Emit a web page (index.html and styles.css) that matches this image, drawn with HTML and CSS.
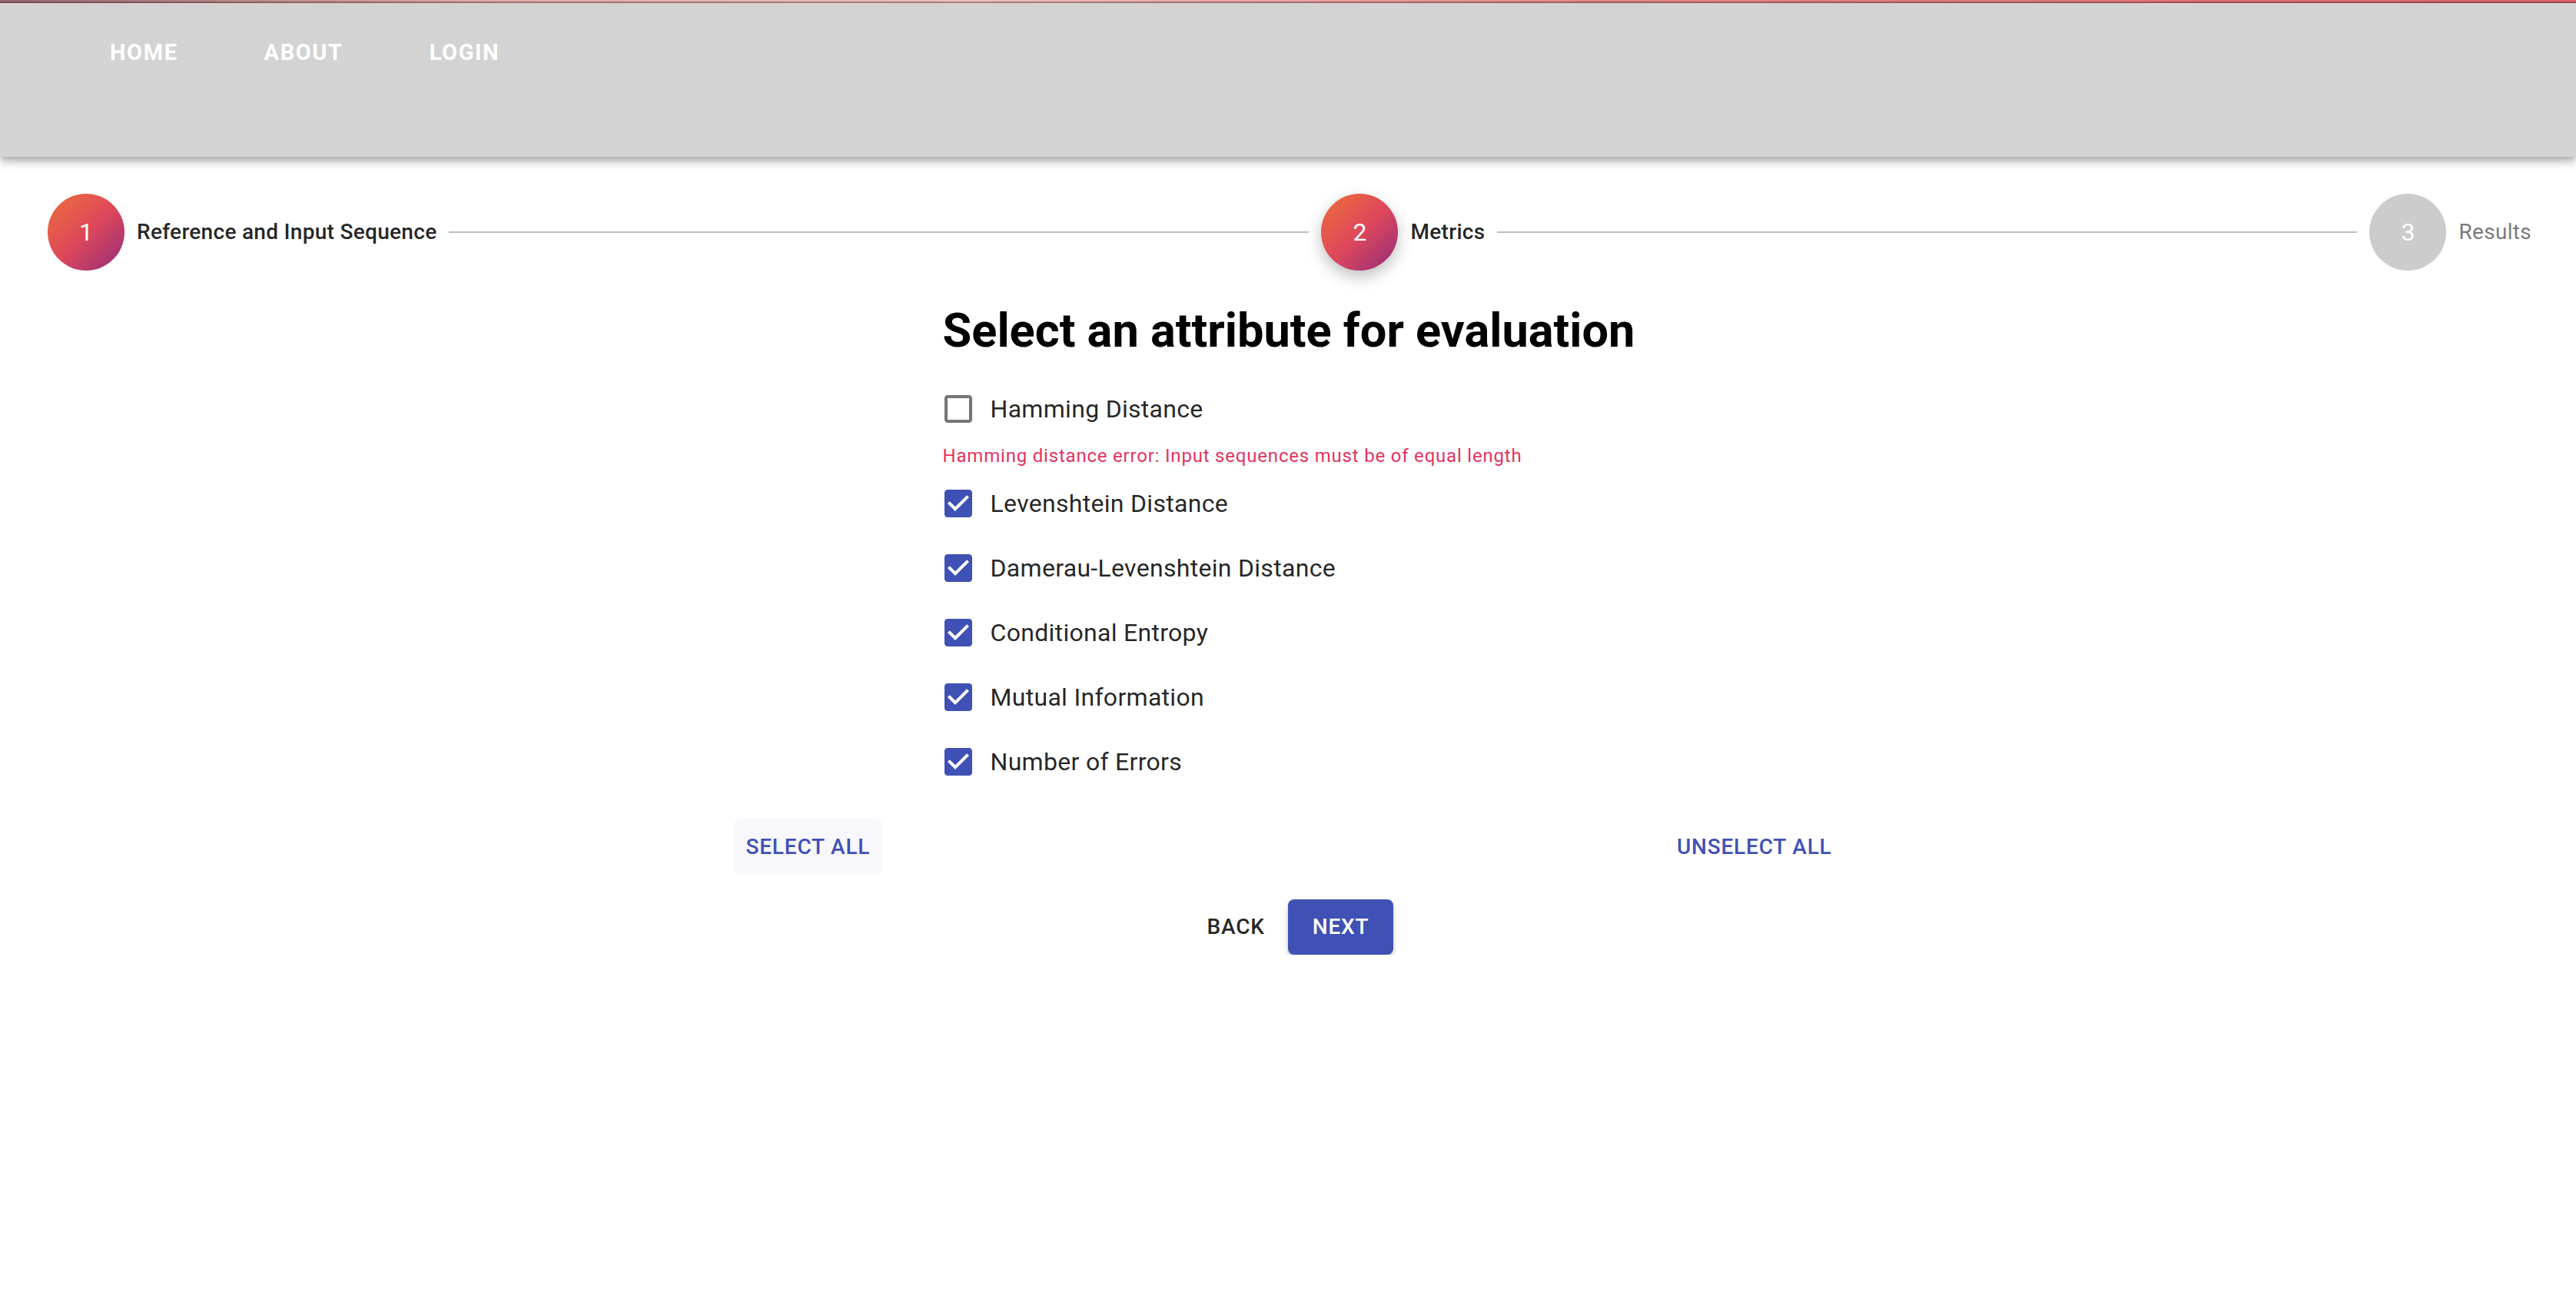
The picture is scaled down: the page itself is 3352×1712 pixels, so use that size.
FILE: index.html
```html
<!DOCTYPE html>
<html lang="en">
<head>
<meta charset="utf-8">
<title>Metrics</title>
<link rel="stylesheet" href="styles.css">
</head>
<body>
<div class="topline"></div>
<header class="appbar">
  <nav class="toolbar">
    <a class="nav-btn">HOME</a>
    <a class="nav-btn">ABOUT</a>
    <a class="nav-btn">LOGIN</a>
  </nav>
</header>

<div class="stepper">
  <div class="step">
    <div class="step-icon done">1</div>
    <span class="step-label strong">Reference and Input Sequence</span>
  </div>
  <div class="connector"></div>
  <div class="step">
    <div class="step-icon done active">2</div>
    <span class="step-label strong">Metrics</span>
  </div>
  <div class="connector"></div>
  <div class="step">
    <div class="step-icon">3</div>
    <span class="step-label muted">Results</span>
  </div>
</div>

<main class="content">
  <div class="panel">
    <h1 class="title">Select an attribute for evaluation</h1>
    <div class="options">
      <label class="option">
        <span class="cb"><svg viewBox="0 0 24 24" class="cb-off"><path d="M19 5v14H5V5h14m0-2H5c-1.11 0-2 .9-2 2v14c0 1.1.89 2 2 2h14c1.11 0 2-.9 2-2V5c0-1.1-.89-2-2-2z"/></svg></span>
        <span class="opt-text">Hamming Distance</span>
      </label>
      <p class="error">Hamming distance error: Input sequences must be of equal length</p>
      <label class="option">
        <span class="cb"><svg viewBox="0 0 24 24" class="cb-on"><path d="M19 3H5c-1.11 0-2 .9-2 2v14c0 1.1.89 2 2 2h14c1.11 0 2-.9 2-2V5c0-1.1-.89-2-2-2zm-9 14l-5-5 1.41-1.41L10 14.17l7.590-7.59L19 8l-9 9z"/></svg></span>
        <span class="opt-text">Levenshtein Distance</span>
      </label>
      <label class="option">
        <span class="cb"><svg viewBox="0 0 24 24" class="cb-on"><path d="M19 3H5c-1.11 0-2 .9-2 2v14c0 1.1.89 2 2 2h14c1.11 0 2-.9 2-2V5c0-1.1-.89-2-2-2zm-9 14l-5-5 1.41-1.41L10 14.17l7.59-7.59L19 8l-9 9z"/></svg></span>
        <span class="opt-text">Damerau-Levenshtein Distance</span>
      </label>
      <label class="option">
        <span class="cb"><svg viewBox="0 0 24 24" class="cb-on"><path d="M19 3H5c-1.11 0-2 .9-2 2v14c0 1.1.89 2 2 2h14c1.11 0 2-.9 2-2V5c0-1.1-.89-2-2-2zm-9 14l-5-5 1.41-1.41L10 14.17l7.59-7.59L19 8l-9 9z"/></svg></span>
        <span class="opt-text">Conditional Entropy</span>
      </label>
      <label class="option">
        <span class="cb"><svg viewBox="0 0 24 24" class="cb-on"><path d="M19 3H5c-1.11 0-2 .9-2 2v14c0 1.1.89 2 2 2h14c1.11 0 2-.9 2-2V5c0-1.1-.89-2-2-2zm-9 14l-5-5 1.41-1.41L10 14.17l7.59-7.59L19 8l-9 9z"/></svg></span>
        <span class="opt-text">Mutual Information</span>
      </label>
      <label class="option">
        <span class="cb"><svg viewBox="0 0 24 24" class="cb-on"><path d="M19 3H5c-1.11 0-2 .9-2 2v14c0 1.1.89 2 2 2h14c1.11 0 2-.9 2-2V5c0-1.1-.89-2-2-2zm-9 14l-5-5 1.41-1.41L10 14.17l7.59-7.59L19 8l-9 9z"/></svg></span>
        <span class="opt-text">Number of Errors</span>
      </label>
    </div>
  </div>

  <div class="select-row">
    <button class="text-btn primary hovered">SELECT ALL</button>
    <button class="text-btn primary">UNSELECT ALL</button>
  </div>

  <div class="nav-row">
    <button class="text-btn back">BACK</button>
    <button class="contained-btn">NEXT</button>
  </div>
</main>
</body>
</html>
```

FILE: styles.css
```css
* { box-sizing: border-box; }

html, body {
  margin: 0;
  padding: 0;
  background: #ffffff;
  font-family: Roboto, "Noto Sans", Arial, sans-serif;
}

.topline {
  height: 4px;
  background:
    linear-gradient(to bottom, rgba(0,0,0,0) 50%, rgba(70,10,10,0.35) 50%),
    linear-gradient(to right, #9c6e72 0%, #e9b4b4 20%, #f3c6c6 38%, #e98e8e 62%, #e06a72 100%);
}

.appbar {
  height: 200px;
  background: #d3d3d3;
  box-shadow: 0 4px 8px -2px rgba(0,0,0,0.2), 0 8px 10px 0 rgba(0,0,0,0.14), 0 2px 20px 0 rgba(0,0,0,0.12);
  position: relative;
  z-index: 1;
}

.toolbar {
  height: 128px;
  display: flex;
  align-items: center;
  padding-left: 127px;
  gap: 80px;
}

.nav-btn {
  color: #ffffff;
  font-family: Roboto, sans-serif;
  font-weight: 700;
  font-size: 29px;
  letter-spacing: 1.6px;
  padding: 12px 16px;
  line-height: 49px;
}

.stepper {
  display: flex;
  align-items: center;
  padding: 48px 42px 48px 46px;
}

.step {
  display: flex;
  align-items: center;
  padding: 0 16px;
  flex: none;
}

.step-icon {
  width: 100px;
  height: 100px;
  border-radius: 50%;
  background: #cccccc;
  color: #ffffff;
  font-size: 32px;
  display: flex;
  align-items: center;
  justify-content: center;
  flex: none;
}

.step-icon.done {
  background-image: linear-gradient(136deg, rgb(236,112,58) 0%, rgb(223,72,90) 50%, rgb(146,44,124) 100%);
}

.step-icon.active {
  box-shadow: 0 8px 20px 0 rgba(0,0,0,0.25);
}

.step-label {
  padding-left: 16px;
  font-size: 28px;
  letter-spacing: 0.3px;
  line-height: 40px;
}

.step-label.strong {
  font-weight: 500;
  color: rgba(0,0,0,0.87);
}

.step-label.muted {
  font-weight: 400;
  color: rgba(0,0,0,0.54);
}

.connector {
  flex: 1 1 auto;
  height: 2px;
  background: #bdbdbd;
}

.content {
  display: flex;
  flex-direction: column;
  align-items: center;
}

.panel {
  display: flex;
  flex-direction: column;
  padding-left: 2px;
}

.title {
  margin: 0 0 30px 0;
  font-size: 61.3px;
  line-height: 60px;
  font-weight: 700;
  color: #000000;
}

.options {
  display: flex;
  flex-direction: column;
  align-items: flex-start;
}

.option {
  display: flex;
  align-items: center;
  height: 84px;
  margin-left: -22px;
}

.cb {
  width: 84px;
  height: 84px;
  padding: 18px;
  display: block;
}

.cb svg {
  width: 48px;
  height: 48px;
  display: block;
}

.cb-off { fill: #757575; }
.cb-on { fill: #3f51b5; }

.opt-text {
  font-size: 32px;
  letter-spacing: 0.3px;
  line-height: 48px;
  color: rgba(0,0,0,0.87);
}

.error {
  margin: 0;
  font-size: 24px;
  line-height: 39px;
  letter-spacing: 0.8px;
  color: #e2335f;
}

.select-row {
  width: 1447px;
  margin-top: 33px;
  padding-left: 2px;
  display: flex;
  justify-content: space-between;
}

.text-btn {
  border: none;
  background: transparent;
  font-family: Roboto, sans-serif;
  font-weight: 500;
  font-size: 28px;
  letter-spacing: 0.8px;
  line-height: 48px;
  padding: 12px 16px;
  border-radius: 8px;
  cursor: pointer;
}

.text-btn.primary { color: #3f51b5; }
.text-btn.hovered { background: rgba(63,81,181,0.045); }
.text-btn.back { color: rgba(0,0,0,0.87); }

.nav-row {
  margin-top: 32px;
  display: flex;
  justify-content: center;
  gap: 14px;
  padding-left: 16px;
}

.contained-btn {
  border: none;
  background: #3f51b5;
  color: #ffffff;
  font-family: Roboto, sans-serif;
  font-weight: 500;
  font-size: 28px;
  letter-spacing: 0.8px;
  line-height: 48px;
  padding: 12px 32px;
  border-radius: 8px;
  box-shadow: 0 6px 2px -4px rgba(0,0,0,0.2), 0 4px 4px 0 rgba(0,0,0,0.14), 0 2px 10px 0 rgba(0,0,0,0.12);
}
```
